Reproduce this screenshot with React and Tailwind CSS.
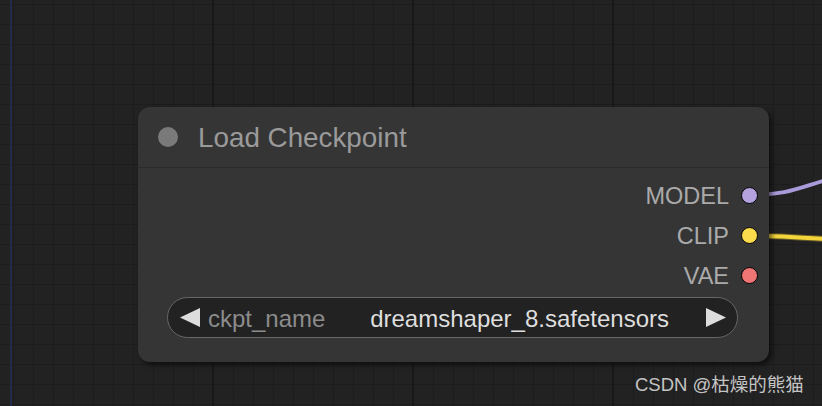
import React from "react";

function Grid() {
  const v = [];
  for (let x = 13; x < 822; x += 20) v.push(x);
  const h = [];
  for (let y = 4; y < 406; y += 20) h.push(y);
  return (
    <svg className="absolute inset-0" width="822" height="406">
      {v.map((x) => (
        <line key={"v" + x} x1={x + 0.5} y1="0" x2={x + 0.5} y2="406" stroke="#1c1c1c" strokeWidth="1" />
      ))}
      {h.map((y) => (
        <line key={"h" + y} x1="0" y1={y + 0.5} x2="822" y2={y + 0.5} stroke="#1c1c1c" strokeWidth="1" />
      ))}
      {[213, 413, 613].map((x) => (
        <line key={"m" + x} x1={x} y1="0" x2={x} y2="406" stroke="#191919" strokeWidth="2" />
      ))}
      <line x1="11" y1="0" x2="11" y2="406" stroke="#1f2b47" strokeWidth="2" />
    </svg>
  );
}

function Wires() {
  return (
    <svg className="absolute inset-0" width="822" height="406">
      <path d="M749 195 C 790 195, 800 187, 830 179" fill="none" stroke="#a99bd9" strokeWidth="4" />
      <path d="M749 236 C 790 236, 800 238, 830 239" fill="none" stroke="#e8c930" strokeWidth="6" opacity="0.35" />
      <path d="M749 236 C 790 236, 800 238, 830 239" fill="none" stroke="#f3d43a" strokeWidth="4" />
    </svg>
  );
}

function Slot({ label, color }) {
  return (
    <div className="flex h-[40px] items-center justify-end">
      <span className="translate-y-[2px] text-[23.5px] leading-none text-[#aaaaaa]">{label}</span>
      <span
        className="ml-[12px] h-[17px] w-[17px] rounded-full border-[1.5px] border-black"
        style={{ backgroundColor: color }}
      />
    </div>
  );
}

export default function App() {
  return (
    <div
      className="relative h-[406px] w-[822px] overflow-hidden bg-[#222222]"
      style={{ fontFamily: '"Liberation Sans", Arial, "Noto Sans CJK SC", sans-serif' }}
    >
      <Grid />
      <Wires />
      <div className="absolute left-[138px] top-[107px] flex h-[255px] w-[631px] flex-col rounded-[12px] bg-[#353535] shadow-[3px_3px_5px_rgba(0,0,0,0.55)]">
        <div className="flex h-[61px] items-center border-b border-[#2a2a2a] pl-[20px]">
          <span className="h-[20px] w-[20px] rounded-full bg-[#7a7a7a]" />
          <span className="ml-[20px] translate-y-[1px] text-[27.8px] leading-none text-[#9a9a9a]">Load Checkpoint</span>
        </div>
        <div className="flex flex-col pr-[11px] pt-[7px]">
          <Slot label="MODEL" color="#b4a2de" />
          <Slot label="CLIP" color="#f9db4c" />
          <Slot label="VAE" color="#ef7474" />
        </div>
        <div className="ml-[29px] mt-[2px] flex h-[41px] w-[571px] items-center rounded-full border-[1.5px] border-[#676767] bg-[#222222] pl-[12px] pr-[11px]">
          <svg width="20" height="19" viewBox="0 0 20 19">
            <polygon points="0,9.5 20,0 20,19" fill="#dddddd" />
          </svg>
          <span className="ml-[8px] translate-y-[1px] text-[24px] leading-none text-[#8c8c8c]">ckpt_name</span>
          <span className="ml-auto mr-[37px] translate-y-[1px] text-[24px] leading-none text-[#dedede]">dreamshaper_8.safetensors</span>
          <svg width="20" height="19" viewBox="0 0 20 19">
            <polygon points="20,9.5 0,0 0,19" fill="#dddddd" />
          </svg>
        </div>
      </div>
      <div className="absolute left-[635px] top-[376px] text-[18.5px] leading-none text-[#c4c4c4]">
        CSDN @枯燥的熊猫
      </div>
    </div>
  );
}
